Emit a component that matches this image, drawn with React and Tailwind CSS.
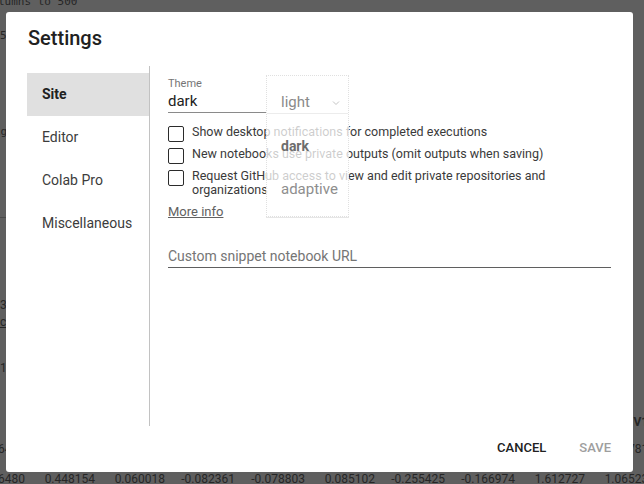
const navItems = ['Site', 'Editor', 'Colab Pro', 'Miscellaneous'];

const options = [
  'Show desktop notifications for completed executions',
  'New notebooks use private outputs (omit outputs when saving)',
  'Request GitHub access to view and edit private repositories and organizations',
];

const headerCells = ['', 'V1', 'V2', 'V3', 'V4', 'V5', 'V6', 'V7', 'V8', 'V10'];
const rowA = ['6479', '0.412877', '0.120945', '-0.075133', '-0.031972', '0.101264', '-0.232809', '-0.140733', '1.588410', '0.217812'];
const rowB = ['6480', '0.448154', '0.060018', '-0.082361', '-0.078803', '0.085102', '-0.255425', '-0.166974', '1.612727', '1.065232'];

function TableRow({ cells, bold }) {
  return (
    <div className={`-ml-[45px] flex h-[14px] text-[12px] leading-[14px] ${bold ? 'font-bold' : ''}`}>
      {cells.map((c, i) => (
        <div key={i} className="w-[70px] shrink-0 text-right">
          {c}
        </div>
      ))}
    </div>
  );
}

function Backdrop() {
  return (
    <div className="flex h-[484px] flex-col text-[#262626]">
      <div className="-ml-[2px] -mt-[5px] h-[14px] font-['DejaVu_Sans_Mono',monospace] text-[11px] leading-[14px]">
        lumns to 500
      </div>
      <div className="mt-[20px] h-[14px] font-['DejaVu_Sans_Mono',monospace] text-[11px] leading-[14px]">5</div>
      <div className="-ml-[6px] mt-[82px] h-[14px] font-['DejaVu_Sans_Mono',monospace] text-[11px] leading-[14px]">ig]</div>
      <div className="mt-[78px] h-px w-[6px] bg-[#4a4a4a]"></div>
      <div className="mt-[80px] h-[14px] text-[12px] leading-[14px]">30</div>
      <div className="mt-[3px] h-[14px] text-[12px] leading-[14px] underline">c/</div>
      <div className="mt-[32px] h-[14px] text-[12px] leading-[14px]">1</div>
      <div className="mt-auto flex flex-col">
        <TableRow cells={headerCells} bold />
        <div className="mt-[13px]">
          <TableRow cells={rowA} />
        </div>
        <div className="-mb-[2px] mt-[16px]">
          <TableRow cells={rowB} />
        </div>
      </div>
    </div>
  );
}

function ThemeMenu() {
  return (
    <div className="absolute left-[116px] top-[9px] h-[142px] w-[83px] border border-dotted border-[#e0e0e0] bg-white/75 shadow-[0_1px_0_#e6e6e6]">
      <div className="flex h-[38px] items-center justify-between border-b border-[#ececec] pl-[14px] pr-[8px] pt-[14px] text-[15px] text-[#8a8a8a]">
        <span className="leading-[18px]">light</span>
        <svg width="8" height="6" viewBox="0 0 8 6" className="mt-[2px]">
          <path d="M1 1.5 L4 4.5 L7 1.5" fill="none" stroke="#c4c4c4" strokeWidth="1" />
        </svg>
      </div>
      <div className="pl-[14px] pt-[23px] text-[14px] font-bold leading-[18px] text-[#6d6d6d]">dark</div>
      <div className="pl-[14px] pt-[25px] text-[15px] leading-[18px] text-[#8e8e8e]">adaptive</div>
    </div>
  );
}

export default function App() {
  return (
    <div className="relative h-[484px] w-[644px] overflow-hidden bg-[#5f5f5f] font-['Roboto',sans-serif]">
      <Backdrop />

      <div className="absolute left-[6px] top-[12px] flex h-[460px] w-[627px] flex-col rounded-[3px] bg-white">
        <h1 className="ml-[22px] mt-[14px] h-[24px] text-[20px] font-medium leading-[24px] text-[#212121]">Settings</h1>

        <div className="mt-[16px] flex h-[360px]">
          <nav className="ml-[21px] w-[123px] border-r border-[#c2c2c2] pt-[7px]">
            {navItems.map((item, idx) => (
              <div
                key={item}
                className={`flex h-[43px] items-center pl-[15px] text-[14px] ${
                  idx === 0 ? 'h-[42px] bg-[#e0e0e0] font-bold text-[#212121]' : 'text-[#3c3c3c]'
                }`}
              >
                {item}
              </div>
            ))}
          </nav>

          <div className="relative flex-1 pl-[18px] pr-[22px]">
            <div className="mt-[11px] h-[13px] text-[11px] leading-[13px] text-[#757575]">Theme</div>
            <div className="h-[23px] w-[99px] border-b border-[#8a8a8a] pt-[2px] text-[15px] leading-[18px] text-[#212121]">
              dark
            </div>

            <div className="mt-[13px] flex flex-col gap-[6px]">
              {options.map((text) => (
                <label key={text} className="flex items-start gap-[8px]">
                  <span className="h-[16px] w-[16px] shrink-0 rounded-[2px] border-[1.5px] border-[#2b2b2b]"></span>
                  <span className="-mt-px text-[12.5px] leading-[14px] text-[#3a3a3a]">{text}</span>
                </label>
              ))}
            </div>

            <div className="mt-[8px] text-[13px] leading-[14px] text-[#616161] underline">More info</div>

            <div className="mt-[28px] border-b border-[#5f5f5f] pb-[2px] text-[14px] leading-[18px] text-[#757575]">
              Custom snippet notebook URL
            </div>

            <ThemeMenu />
          </div>
        </div>

        <div className="flex h-[44px] items-center justify-end gap-[33px] pr-[22px] text-[13px] font-medium">
          <button className="text-[#212121]">CANCEL</button>
          <button className="text-[#9e9e9e]">SAVE</button>
        </div>
      </div>
    </div>
  );
}
